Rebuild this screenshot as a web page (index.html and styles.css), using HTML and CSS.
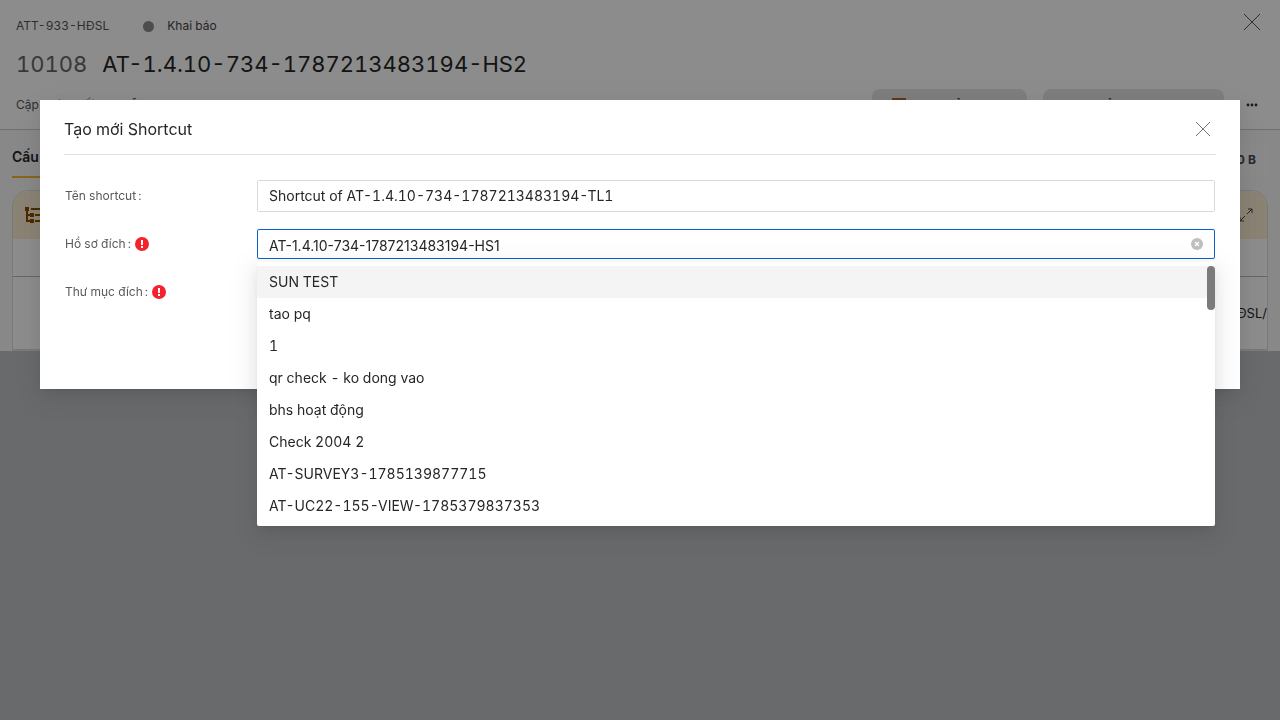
FILE: index.html
```
<!DOCTYPE html>
<html lang="vi">
<head>
  <meta charset="UTF-8">
  <meta name="viewport" content="width=device-width, initial-scale=1.0">
  <title>Tạo mới Shortcut</title>
  <link rel="stylesheet" href="styles.css">
</head>
<body>
  <div class="page">
    <header class="page-header">
      <div class="meta">
        <span class="meta-code">ATT-933-HĐSL</span>
        <span class="status-dot"></span>
        <span class="status-text">Khai báo</span>
        <button class="icon-btn page-close" type="button" aria-label="Đóng hồ sơ">
          <svg width="18" height="18" viewBox="0 0 18 18"><path d="M1 1l16 16M17 1L1 17" stroke="#555" fill="none"/></svg>
        </button>
      </div>
      <h1 class="title"><span class="title-id">10108</span><span>AT-1.4.10-734-1787213483194-HS2</span></h1>
      <div class="toolbar">
        <span class="updated">Cập nhật cuối: Nguyễn An</span>
        <button class="btn" type="button">
          <svg width="14" height="14" viewBox="0 0 14 14"><path d="M0 1h14v12H0z" fill="none" stroke="#b4632a" stroke-width="2"/></svg>
          Chuyển bước
        </button>
        <button class="btn btn-wide" type="button">Chuyển người xử lý</button>
        <button class="icon-btn" type="button" aria-label="Thêm">
          <svg width="12" height="4" viewBox="0 0 12 4" fill="#333"><circle cx="2" cy="2" r="1.4"/><circle cx="6" cy="2" r="1.4"/><circle cx="10" cy="2" r="1.4"/></svg>
        </button>
      </div>
    </header>

    <main class="content">
      <div class="tabs">
        <a class="tab" href="#structure">Cấu trúc hồ sơ</a>
        <span class="size">Dung lượng: 0 B</span>
      </div>
      <section class="panel" id="structure">
        <div class="panel-head">
          <svg width="20" height="18" viewBox="0 0 20 18" fill="none" stroke="#8a4b00" stroke-width="2"><path d="M3 2v13h5M3 9h5M7 3h13M11 9h9M11 15h9"/><path d="M1 1h4v4H1zM6 7h4v4H6zM6 13h4v4H6z" fill="#8a4b00" stroke="none"/></svg>
          <svg width="14" height="14" viewBox="0 0 14 14" fill="none" stroke="#444"><path d="M1 13L6 8M8 6l5-5M9 1h4v4M1 9v4h4"/></svg>
        </div>
        <div class="panel-row"></div>
        <div class="panel-row panel-row-tall"><span>ATT-933-HĐSL/</span></div>
      </section>
    </main>
  </div>

  <div class="mask">
    <div class="modal" role="dialog" aria-labelledby="modal-title">
      <div class="modal-head">
        <h2 id="modal-title">Tạo mới Shortcut</h2>
        <button class="icon-btn" type="button" aria-label="Đóng">
          <svg width="16" height="16" viewBox="0 0 16 16"><path d="M1 1l14 14M15 1L1 15" stroke="#777" fill="none"/></svg>
        </button>
      </div>
      <form class="form">
        <div class="form-row">
          <label for="shortcut-name">Tên shortcut<span class="colon">:</span></label>
          <input class="text-input" id="shortcut-name" type="text" value="Shortcut of AT-1.4.10-734-1787213483194-TL1">
        </div>
        <div class="form-row">
          <label for="target-file">Hồ sơ đích<span class="colon">:</span>
            <svg class="required" width="14" height="14" viewBox="0 0 14 14"><circle cx="7" cy="7" r="7" fill="#f5222d"/><path d="M6 3h2v5H6zM6 9h2v2H6z" fill="#fff"/></svg>
          </label>
          <div class="select">
            <input class="select-input" id="target-file" type="text" role="combobox" aria-expanded="true" aria-controls="target-list" value="AT-1.4.10-734-1787213483194-HS1">
            <button class="icon-btn" type="button" aria-label="Xóa">
              <svg width="12" height="12" viewBox="0 0 12 12"><circle cx="6" cy="6" r="6" fill="#bfbfbf"/><path d="M4 4l4 4M8 4L4 8" stroke="#fff" stroke-width="1.200"/></svg>
            </button>
            <div class="dropdown">
              <ul class="options" id="target-list" role="listbox">
                <li class="option option-active" role="option" aria-selected="true">SUN TEST</li>
                <li class="option" role="option">tao pq</li>
                <li class="option" role="option">1</li>
                <li class="option" role="option">qr check - ko dong vao</li>
                <li class="option" role="option">bhs hoạt động</li>
                <li class="option" role="option">Check 2004 2</li>
                <li class="option" role="option">AT-SURVEY3-1785139877715</li>
                <li class="option" role="option">AT-UC22-155-VIEW-1785379837353</li>
              </ul>
              <div class="scroll-thumb"></div>
            </div>
          </div>
        </div>
        <div class="form-row">
          <label for="target-folder">Thư mục đích<span class="colon">:</span>
            <svg class="required" width="14" height="14" viewBox="0 0 14 14"><circle cx="7" cy="7" r="7" fill="#f5222d"/><path d="M6 3h2v5H6zM6 9h2v2H6z" fill="#fff"/></svg>
          </label>
          <input class="text-input" id="target-folder" type="text">
        </div>
      </form>
    </div>
  </div>
</body>
</html>
```

FILE: styles.css
```
* {
  box-sizing: border-box;
}
body {
  margin: 0;
  min-height: 100vh;
  background: #bfc1c4;
  color: #262626;
  font-family: Inter, "Noto Sans", sans-serif;
  font-size: 14px;
  line-height: 22px;
  font-variant-numeric: tabular-nums;
  font-feature-settings: "tnum";
}
input,
button {
  font-family: inherit;
  font-size: 14px;
  color: inherit;
}
svg {
  display: block;
  flex: none;
}
.icon-btn {
  display: flex;
  padding: 0;
  border: none;
  background: none;
  cursor: pointer;
}

/* page under the mask */
.page {
  background: #fff;
  overflow: hidden;
}
.page-header {
  padding: 12px 16px 8px;
  border-bottom: 1px solid #ccc;
}
.meta {
  display: flex;
  align-items: center;
  height: 28px;
  font-size: 12px;
  color: #555;
}
.status-dot {
  width: 11px;
  height: 11px;
  margin: 0 13px 0 34px;
  border-radius: 50%;
  background: #8c8c8c;
}
.status-text {
  color: #444;
}
.page-close {
  align-self: flex-start;
  margin: 1px 3px 0 auto;
}
.title {
  display: flex;
  gap: 15px;
  margin: 0;
  padding: 8px 0 9px;
  font-size: 22px;
  font-weight: 400;
  line-height: 32px;
}
.title-id {
  color: #666;
}
.toolbar {
  display: flex;
  align-items: center;
  gap: 16px;
  padding-right: 6px;
}
.updated {
  flex: 1;
  font-size: 12px;
  color: #555;
}
.btn {
  display: flex;
  align-items: center;
  justify-content: center;
  gap: 12px;
  width: 155px;
  height: 32px;
  padding: 0;
  border: none;
  border-radius: 8px;
  background: #e6e6e6;
  font-weight: 500;
}
.btn-wide {
  width: 181px;
  margin-right: 6px;
}
.content {
  padding: 14px 12px 0;
  background: #f8f8f8;
}
.tabs {
  display: flex;
  justify-content: space-between;
  margin-bottom: 12px;
}
.tab {
  height: 34px;
  padding-top: 2px;
  border-bottom: 2px solid #f7b731;
  color: #262626;
  font-weight: 600;
  text-decoration: none;
}
.size {
  height: 32px;
  padding: 0 12px;
  border-radius: 6px;
  background: #fafafa;
  color: #414a5e;
  font-size: 12px;
  font-weight: 700;
  line-height: 32px;
}
.panel {
  border: 1px solid #ddd;
  border-radius: 16px 16px 0 0;
  background: #fff;
  overflow: hidden;
}
.panel-head {
  display: flex;
  align-items: center;
  justify-content: space-between;
  height: 48px;
  padding: 0 14px 0 11px;
  background: #fbefd4;
}
.panel-row {
  height: 38px;
  border-bottom: 1px solid #bbb;
}
.panel-row-tall {
  display: flex;
  align-items: center;
  justify-content: flex-end;
  height: 73px;
  border-bottom-color: #ddd;
  font-size: 13px;
}

/* modal */
.mask {
  position: fixed;
  inset: 0;
  padding: 100px 40px;
  background: rgba(0, 0, 0, 0.45);
}
.modal {
  padding: 0 24px 81px;
  background: #fff;
  box-shadow: 0 3px 6px -4px rgba(0, 0, 0, 0.12), 0 6px 16px rgba(0, 0, 0, 0.08), 0 9px 28px 8px rgba(0, 0, 0, 0.05);
}
.modal-head {
  display: flex;
  align-items: center;
  justify-content: space-between;
  height: 55px;
  padding: 4px 5px 0 0;
  border-bottom: 1px solid #dfe2ea;
}
.modal-head h2 {
  margin: 0;
  font-size: 16px;
  font-weight: 400;
}
.form {
  display: flex;
  flex-direction: column;
  gap: 16px;
  padding: 25px 1px 0;
}
.form-row {
  display: flex;
  align-items: center;
  height: 32px;
}
.form-row label {
  display: flex;
  align-items: center;
  flex: none;
  width: 192px;
  font-size: 12px;
  color: #595959;
}
.colon {
  margin-left: 2px;
}
.required {
  margin-left: 4px;
}
.text-input {
  flex: 1;
  min-width: 0;
  height: 32px;
  padding: 0 11px 2px;
  border: 1px solid #d9d9d9;
  border-radius: 2px;
  font-feature-settings: "tnum";
}
.select {
  position: relative;
  display: flex;
  align-items: center;
  flex: 1;
  height: 30px;
  padding-right: 11px;
  border: 1px solid #0b5fd0;
  border-radius: 2px;
}
.select-input {
  flex: 1;
  min-width: 0;
  padding: 3px 11px 0;
  border: none;
  outline: none;
  background: none;
  font-feature-settings: normal;
  font-variant-numeric: normal;
}
.dropdown {
  position: absolute;
  z-index: 1;
  top: 32px;
  left: -1px;
  right: -1px;
  padding: 4px 0;
  border-radius: 2px;
  background: #fff;
  box-shadow: 0 3px 6px -4px rgba(0, 0, 0, 0.12), 0 6px 16px rgba(0, 0, 0, 0.08), 0 9px 28px 8px rgba(0, 0, 0, 0.05);
}
.options {
  margin: 0;
  padding: 0;
  list-style: none;
}
.option {
  padding: 5px 12px;
}
.option-active {
  background: #f4f4f4;
}
.scroll-thumb {
  position: absolute;
  top: 4px;
  right: 0;
  width: 8px;
  height: 44px;
  border-radius: 4px;
  background: #7b7b7b;
}
```
